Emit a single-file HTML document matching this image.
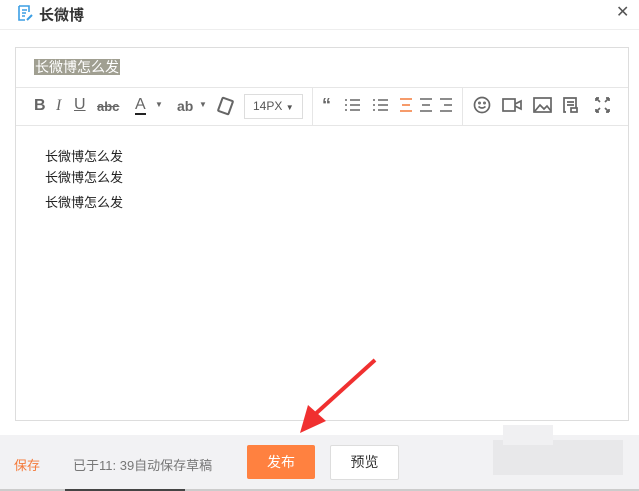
<!DOCTYPE html><html><head><meta charset="utf-8"><style>
body{margin:0;width:639px;height:491px;background:#fff;position:relative;overflow:hidden;font-family:"Liberation Sans","Noto Sans CJK SC",sans-serif;}
.a{position:absolute}
.ic{position:absolute;color:#555;font-size:14px}
</style></head><body>
<svg class="a" style="left:16px;top:4px" width="18" height="18" viewBox="0 0 18 18"><path d="M3 2h10v6M3 2v14h6M6 6h5M6 9h4M6 12h3" stroke="#3b9ee4" stroke-width="1.6" fill="none"/><path d="M11 16l5-5" stroke="#3b9ee4" stroke-width="2"/></svg>
<div class="a" style="left:39px;top:4px;font-size:15px;font-weight:bold;color:#333">长微博</div>
<div class="a" style="left:616px;top:2px;font-size:16px;color:#555">✕</div>
<div class="a" style="left:0;top:29px;width:639px;height:1px;background:#eee"></div>
<div class="a" style="left:15px;top:47px;width:612px;height:372px;border:1px solid #ddd"></div>
<div class="a" style="left:34px;top:59px;font-size:14px;background:#a09f91;color:#fff;line-height:16px;padding:0 1px">长微博怎么发</div>
<div class="a" style="left:16px;top:87px;width:612px;height:1px;background:#e6e6e6"></div>
<div class="a" style="left:16px;top:125px;width:612px;height:1px;background:#e6e6e6"></div>
<div class="a" style="left:312px;top:88px;width:1px;height:37px;background:#e6e6e6"></div>
<div class="a" style="left:462px;top:88px;width:1px;height:37px;background:#e6e6e6"></div>
<div class="a" style="left:34px;top:97px;font-size:16px;color:#666;font-weight:bold">B</div>
<div class="a" style="left:56px;top:97px;font-size:16px;color:#666;font-style:italic;font-family:'Liberation Serif'">I</div>
<div class="a" style="left:74px;top:96px;font-size:16px;color:#666;text-decoration:underline">U</div>
<div class="a" style="left:97px;top:99px;font-size:13px;color:#666;font-weight:bold;text-decoration:line-through">abc</div>
<div class="a" style="left:135px;top:96px;font-size:16px;color:#666;border-bottom:2px solid #222;line-height:17px">A</div>
<div class="a" style="left:155px;top:100px;font-size:8px;color:#666">▼</div>
<div class="a" style="left:177px;top:98px;font-size:14px;color:#666;font-weight:bold">ab</div>
<div class="a" style="left:199px;top:100px;font-size:8px;color:#666">▼</div>
<div class="a" style="left:219px;top:98px;width:9px;height:12px;border:2px solid #666;border-radius:2px;transform:rotate(20deg)"></div>
<div class="a" style="left:244px;top:94px;width:57px;height:23px;border:1px solid #ddd;font-size:12px;color:#555;line-height:23px;text-indent:8px">14PX <span style="font-size:8px">▼</span></div>
<div class="a" style="left:322px;top:95px;font-size:18px;font-weight:bold;color:#666">“</div>
<svg class="a" style="left:344px;top:97px" width="120" height="16" viewBox="0 0 120 16" stroke-width="1.6"><g stroke="#666"><path d="M1 3h2M6 3h10M1 8h2M6 8h10M1 13h2M6 13h10M29 3h2M34 3h10M29 8h2M34 8h10M29 13h2M34 13h10"/></g><g stroke="#f47a3a"><path d="M56 2h12M58 8h8M56 14h12"/></g><g stroke="#666"><path d="M76 2h12M78 8h8M76 14h12M96 2h12M100 8h8M96 14h12"/></g></svg>
<svg class="a" style="left:472px;top:96px" width="150" height="18" viewBox="0 0 150 18" fill="none" stroke="#666" stroke-width="1.7"><circle cx="10" cy="9" r="7.5"/><path d="M6.5 10.5q3.5 3 7 0"/><circle cx="7.5" cy="7" r=".6"/><circle cx="12.5" cy="7" r=".6"/><rect x="31" y="3" width="12" height="12"/><path d="M43 8l6-3v8l-6-3"/><rect x="62" y="2" width="17" height="14"/><path d="M63 15l5-6 4 4 3-3 4 5"/><path d="M94 16h-2V2h12v10M95 6h7M95 9h7"/><rect x="99" y="12" width="6" height="4"/><path d="M124 2l4 4M124 2h3M124 2v3M137 2l-4 4M137 2h-3M137 2v3M124 16l4-4M124 16h3M124 16v-3M137 16l-4-4M137 16h-3M137 16v-3"/></svg>
<div class="a" style="left:45px;top:146px;font-size:13px;color:#222;line-height:21px">长微博怎么发<br>长微博怎么发<br><div style="margin-top:4px">长微博怎么发</div></div>
<div class="a" style="left:0;top:435px;width:639px;height:54px;background:#f2f2f4"></div>
<div class="a" style="left:0;top:489px;width:639px;height:2px;background:#ccc"></div>
<div class="a" style="left:65px;top:489px;width:120px;height:2px;background:#444"></div>
<div class="a" style="left:14px;top:455px;font-size:13px;color:#f47a3a">保存</div>
<div class="a" style="left:73px;top:455px;font-size:13px;color:#777">已于11: 39自动保存草稿</div>
<div class="a" style="left:247px;top:445px;width:68px;height:34px;background:#ff8140;border-radius:2px;color:#fff;font-size:14px;text-align:center;line-height:34px">发布</div>
<div class="a" style="left:330px;top:445px;width:67px;height:33px;background:#fff;border:1px solid #ddd;border-radius:2px;color:#333;font-size:14px;text-align:center;line-height:33px">预览</div>
<div class="a" style="left:493px;top:440px;width:130px;height:35px;background:#e8e8ea"></div>
<div class="a" style="left:503px;top:425px;width:50px;height:20px;background:#f0f0f2"></div>
<svg class="a" style="left:290px;top:355px" width="90" height="85" viewBox="0 0 90 85"><path d="M85 5L22 62" stroke="#f03030" stroke-width="4"/><path d="M10 78l8-28 18 16z" fill="#f03030"/></svg>
</body></html>
